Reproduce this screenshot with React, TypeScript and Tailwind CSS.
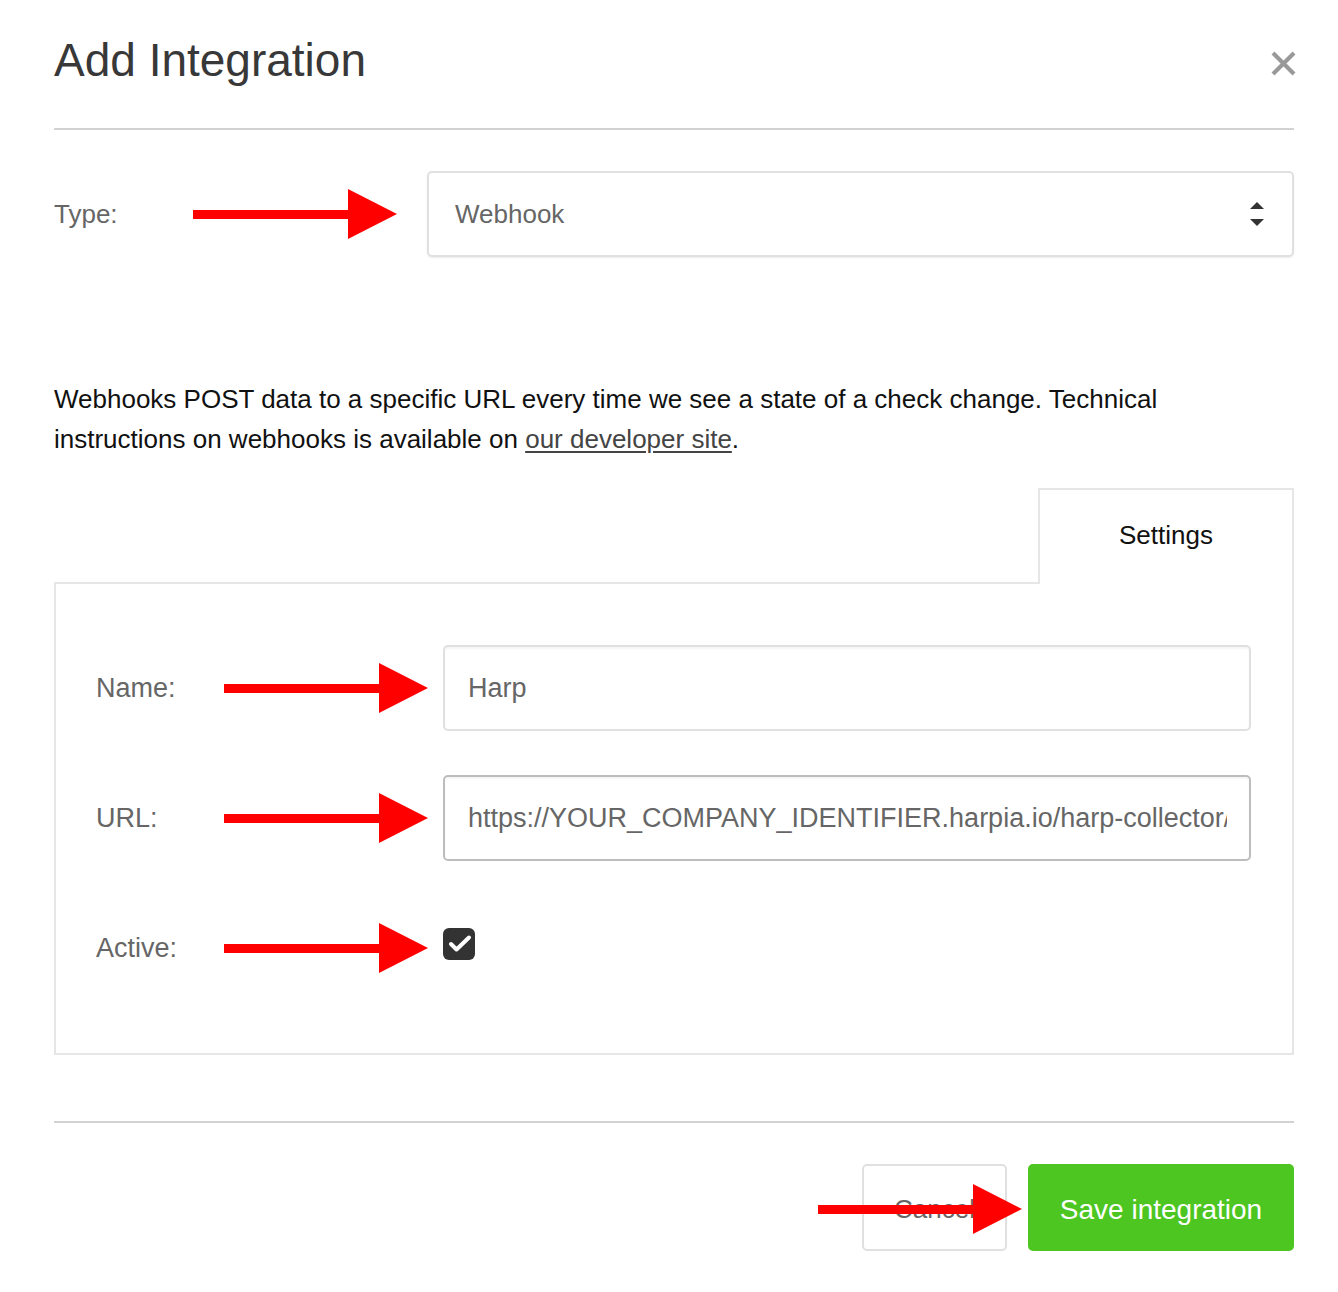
import React from 'react';

// red annotation arrow, drawn over the form
function Arrow({ className = '' }: { className?: string }) {
  return (
    <svg width="204" height="50" viewBox="0 0 204 50" className={`shrink-0 ${className}`}>
      <rect x="0" y="21" width="157" height="9" fill="#ff0000" />
      <polygon points="155,0 204,25 155,50" fill="#ff0000" />
    </svg>
  );
}

function SelectArrows() {
  return (
    <svg width="14" height="24" viewBox="0 0 14 24">
      <polygon points="0,7 7,0 14,7" fill="#333" />
      <polygon points="0,17 14,17 7,24" fill="#333" />
    </svg>
  );
}

function Field({ label, children }: { label: string; children: React.ReactNode }) {
  return (
    <div className="flex h-[86px] items-center">
      <div className="w-[128px] shrink-0 text-[27px] text-[#666]">{label}</div>
      <Arrow />
      <div className="ml-[15px] min-w-0 flex-1">{children}</div>
    </div>
  );
}

export default function App() {
  return (
    <div className="min-h-[1292px] bg-white pl-[54px] pr-[44px] font-['Liberation_Sans',Arial,sans-serif]">
      {/* header */}
      <div className="flex items-start justify-between pt-[37px]">
        <h1 className="text-[46px] leading-none text-[#383838]">Add Integration</h1>
        <button className="mt-[14px] -mr-[2px]">
          <svg width="25" height="25" viewBox="0 0 25 25">
            <line x1="2" y1="2" x2="23" y2="23" stroke="#999" strokeWidth="4" />
            <line x1="23" y1="2" x2="2" y2="23" stroke="#999" strokeWidth="4" />
          </svg>
        </button>
      </div>
      <div className="mt-[45px] h-[2px] bg-[#d2d2d2]" />

      {/* type */}
      <div className="mt-[41px] flex h-[86px] items-center">
        <div className="w-[139px] shrink-0 text-[26px] text-[#666]">Type:</div>
        <Arrow />
        <div className="ml-[30px] flex h-full min-w-0 flex-1 items-center justify-between rounded-[5px] border-2 border-[#e0e0e0] pl-[26px] pr-[28px] shadow-[0_1px_2px_rgba(0,0,0,0.08)]">
          <span className="text-[26px] text-[#666]">Webhook</span>
          <SelectArrows />
        </div>
      </div>

      <p className="mt-[122px] text-[26px] leading-[40px] text-[#111]">
        Webhooks POST data to a specific URL every time we see a state of a check change. Technical instructions on
        webhooks is available on <a className="text-[#444] underline underline-offset-[3px]">our developer site</a>.
      </p>

      {/* tabs */}
      <div className="mt-[29px] flex justify-end">
        <div className="relative z-10 -mb-[2px] flex h-[96px] w-[256px] items-center justify-center border-2 border-b-0 border-[#e6e6e6] bg-white pb-[3px] text-[26px] text-[#111]">
          Settings
        </div>
      </div>
      <div className="border-2 border-[#e6e6e6] pb-[62px] pl-[40px] pr-[41px] pt-[61px]">
        <Field label="Name:">
          <div className="flex h-[86px] items-center overflow-hidden rounded-[5px] border-2 border-[#e0e0e0] pl-[23px] text-[27px] text-[#666] shadow-[inset_0_2px_2px_rgba(0,0,0,0.04)]">
            Harp
          </div>
        </Field>
        <div className="h-[44px]" />
        <Field label="URL:">
          <div className="flex h-[86px] items-center rounded-[5px] border-2 border-[#bdbdbd] pl-[23px] pr-[22px] text-[27px] text-[#666] shadow-[inset_0_2px_2px_rgba(0,0,0,0.04)]">
            <div className="min-w-0 flex-1 overflow-hidden whitespace-nowrap">
              https://YOUR_COMPANY_IDENTIFIER.harpia.io/harp-collector/api/v1/webhook
            </div>
          </div>
        </Field>
        <div className="h-[44px]" />
        <Field label="Active:">
          <div className="-mt-[9px] flex h-[32px] w-[32px] items-center justify-center rounded-[6px] bg-[#333]">
            <svg width="32" height="32" viewBox="0 0 32 32">
              <polyline points="8,16 13.5,21.5 26,9.5" fill="none" stroke="#fff" strokeWidth="4" strokeLinecap="round" strokeLinejoin="round" />
            </svg>
          </div>
        </Field>
      </div>

      <div className="mt-[66px] h-[2px] bg-[#d2d2d2]" />

      {/* footer */}
      <div className="mt-[41px] flex justify-end gap-[21px]">
        <div className="relative">
          <button className="flex h-[87px] w-[145px] items-center justify-center rounded-[5px] border-2 border-[#e0e0e0] bg-white pt-[4px] text-[26px] text-[#666]">
            Cancel
          </button>
          <Arrow className="absolute -left-[44px] top-[20px]" />
        </div>
        <button className="h-[87px] w-[266px] rounded-[5px] bg-[#4dc621] pt-[4px] text-[28px] text-white">Save integration</button>
      </div>
    </div>
  );
}
